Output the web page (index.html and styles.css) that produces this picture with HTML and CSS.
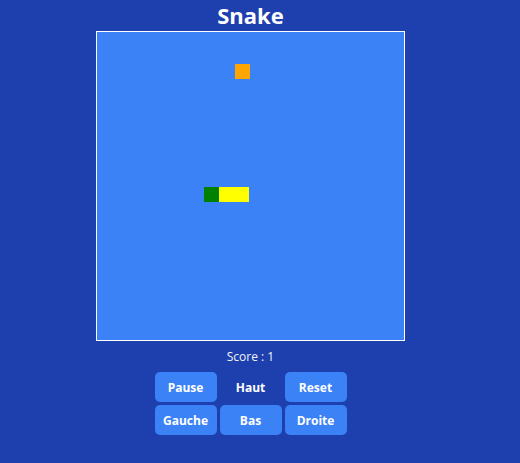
FILE: index.html
```html
<!DOCTYPE html>
<html lang="fr">
<head>
<meta charset="utf-8">
<title>Snake</title>
<link rel="stylesheet" href="styles.css">
</head>
<body>
<main class="app">
  <h1 class="title">Snake</h1>
  <div class="board">
    <div class="cell food" style="left:138px;top:32px"></div>
    <div class="cell head" style="left:107px;top:155px"></div>
    <div class="cell body" style="left:122px;top:155px;width:30px"></div>
  </div>
  <p class="score">Score : 1</p>
  <div class="controls">
    <button class="btn">Pause</button>
    <button class="btn btn-hover">Haut</button>
    <button class="btn">Reset</button>
    <button class="btn">Gauche</button>
    <button class="btn">Bas</button>
    <button class="btn">Droite</button>
  </div>
</main>
</body>
</html>
```
FILE: styles.css
```css
html, body {
  margin: 0;
  padding: 0;
  background: #1e40af;
  height: 100%;
}
body {
  font-family: "Open Sans", "Noto Sans", sans-serif;
  color: #fff;
  padding-right: 19px;
  box-sizing: border-box;
}
.app {
  display: flex;
  flex-direction: column;
  align-items: center;
}
.title {
  margin: 0;
  font-size: 22px;
  font-weight: 700;
  line-height: 31px;
  height: 31px;
}
.board {
  position: relative;
  width: 307px;
  height: 308px;
  background: #3b82f6;
  border: 1px solid #fff;
}
.cell {
  position: absolute;
  width: 15px;
  height: 15px;
}
.food { background: #ffa500; }
.head { background: #008000; }
.body { background: #ffff00; }
.score {
  margin: 0;
  height: 31px;
  line-height: 31px;
  font-size: 12px;
  color: #f3f4f6;
}
.controls {
  display: grid;
  grid-template-columns: repeat(3, 62px);
  grid-auto-rows: 30px;
  column-gap: 3px;
  row-gap: 3px;
}
.btn {
  font-family: inherit;
  font-size: 12px;
  font-weight: 700;
  color: #fff;
  background: #3b82f6;
  border: none;
  border-radius: 5px;
  padding: 0;
}
.btn-hover { background: #1e40af; }
```
